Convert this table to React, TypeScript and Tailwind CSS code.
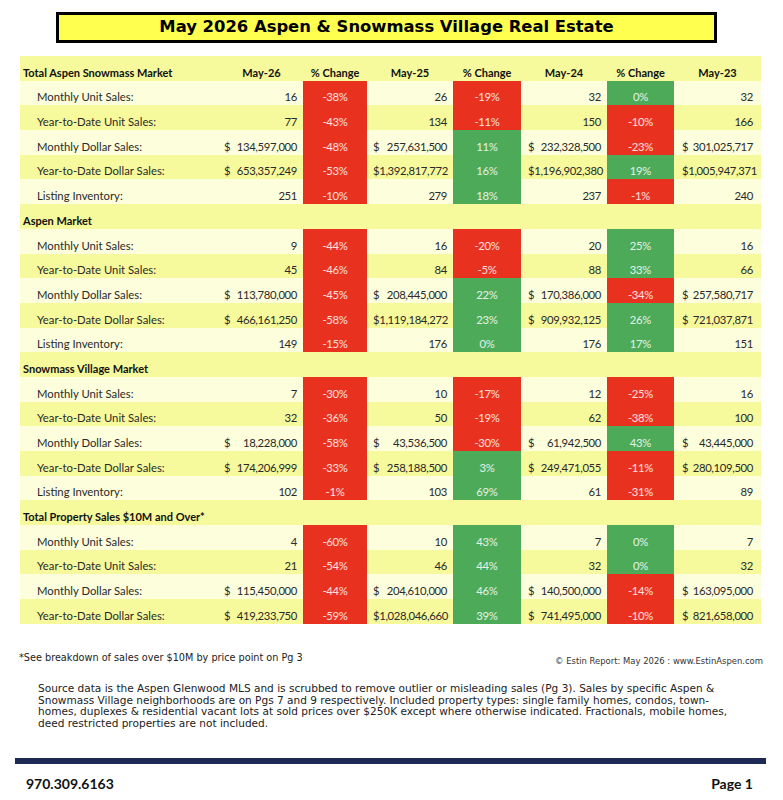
import React from "react";

type Pct = [string, "r" | "g"];
type Row = { label: string; v: string[]; p: Pct[] };
type Section = { title: string; rows: Row[] };

const sections: Section[] = [
  {
    title: "Total Aspen Snowmass Market",
    rows: [
      { label: "Monthly Unit Sales:", v: ["16", "26", "32", "32"], p: [["-38%", "r"], ["-19%", "r"], ["0%", "g"]] },
      { label: "Year-to-Date Unit Sales:", v: ["77", "134", "150", "166"], p: [["-43%", "r"], ["-11%", "r"], ["-10%", "r"]] },
      { label: "Monthly Dollar Sales:", v: ["$134,597,000", "$257,631,500", "$232,328,500", "$301,025,717"], p: [["-48%", "r"], ["11%", "g"], ["-23%", "r"]] },
      { label: "Year-to-Date Dollar Sales:", v: ["$653,357,249", "$1,392,817,772", "$1,196,902,380", "$1,005,947,371"], p: [["-53%", "r"], ["16%", "g"], ["19%", "g"]] },
      { label: "Listing Inventory:", v: ["251", "279", "237", "240"], p: [["-10%", "r"], ["18%", "g"], ["-1%", "r"]] },
    ],
  },
  {
    title: "Aspen Market",
    rows: [
      { label: "Monthly Unit Sales:", v: ["9", "16", "20", "16"], p: [["-44%", "r"], ["-20%", "r"], ["25%", "g"]] },
      { label: "Year-to-Date Unit Sales:", v: ["45", "84", "88", "66"], p: [["-46%", "r"], ["-5%", "r"], ["33%", "g"]] },
      { label: "Monthly Dollar Sales:", v: ["$113,780,000", "$208,445,000", "$170,386,000", "$257,580,717"], p: [["-45%", "r"], ["22%", "g"], ["-34%", "r"]] },
      { label: "Year-to-Date Dollar Sales:", v: ["$466,161,250", "$1,119,184,272", "$909,932,125", "$721,037,871"], p: [["-58%", "r"], ["23%", "g"], ["26%", "g"]] },
      { label: "Listing Inventory:", v: ["149", "176", "176", "151"], p: [["-15%", "r"], ["0%", "g"], ["17%", "g"]] },
    ],
  },
  {
    title: "Snowmass Village Market",
    rows: [
      { label: "Monthly Unit Sales:", v: ["7", "10", "12", "16"], p: [["-30%", "r"], ["-17%", "r"], ["-25%", "r"]] },
      { label: "Year-to-Date Unit Sales:", v: ["32", "50", "62", "100"], p: [["-36%", "r"], ["-19%", "r"], ["-38%", "r"]] },
      { label: "Monthly Dollar Sales:", v: ["$18,228,000", "$43,536,500", "$61,942,500", "$43,445,000"], p: [["-58%", "r"], ["-30%", "r"], ["43%", "g"]] },
      { label: "Year-to-Date Dollar Sales:", v: ["$174,206,999", "$258,188,500", "$249,471,055", "$280,109,500"], p: [["-33%", "r"], ["3%", "g"], ["-11%", "r"]] },
      { label: "Listing Inventory:", v: ["102", "103", "61", "89"], p: [["-1%", "r"], ["69%", "g"], ["-31%", "r"]] },
    ],
  },
  {
    title: "Total Property Sales $10M and Over*",
    rows: [
      { label: "Monthly Unit Sales:", v: ["4", "10", "7", "7"], p: [["-60%", "r"], ["43%", "g"], ["0%", "g"]] },
      { label: "Year-to-Date Unit Sales:", v: ["21", "46", "32", "32"], p: [["-54%", "r"], ["44%", "g"], ["0%", "g"]] },
      { label: "Monthly Dollar Sales:", v: ["$115,450,000", "$204,610,000", "$140,500,000", "$163,095,000"], p: [["-44%", "r"], ["46%", "g"], ["-14%", "r"]] },
      { label: "Year-to-Date Dollar Sales:", v: ["$419,233,750", "$1,028,046,660", "$741,495,000", "$821,658,000"], p: [["-59%", "r"], ["39%", "g"], ["-10%", "r"]] },
    ],
  },
];

// column widths measured off the sheet
const grid = "grid grid-cols-[200px_83px_64px_86px_68px_86px_67px_87px] h-[24.7px] items-stretch";
const valPad = ["pl-[4px] pr-[6px]", "pl-[6px] pr-[6px]", "pl-[7px] pr-[6px]", "pl-[8px] pr-[8px]"];
const heads = ["May-26", "May-25", "May-24", "May-23"];
const cell = "flex items-end pb-[1px] leading-[15px]";

const Value = ({ v, i }: { v: string; i: number }) => {
  const money = v.startsWith("$");
  return (
    <div className={`${cell} tracking-[-0.35px] ${money ? "justify-between" : "justify-end"} ${valPad[i]}`}>
      {money && <span>$</span>}
      <span>{money ? v.slice(1) : v}</span>
    </div>
  );
};

const PctCell = ({ p }: { p: Pct }) => (
  <div
    className={`${cell} justify-center tracking-[-0.3px] text-white/85 ${
      p[1] === "r" ? "bg-[#e8321f]" : "bg-[#4caa59]"
    }`}
  >
    {p[0]}
  </div>
);

export default function App() {
  return (
    <div className="w-[783px] h-[800px] bg-white text-[#222] overflow-hidden">
      <div className="pt-[12px]">
        <div className="ml-[56px] w-[661px] h-[31px] border-[3px] border-black bg-[#ffff4f] flex items-center justify-center [font-family:'DejaVu_Sans',sans-serif] font-bold text-[16.4px] text-black">
          May 2026 Aspen &amp; Snowmass Village Real Estate
        </div>
      </div>

      <div className="ml-[20px] mt-[13px] w-[741px] bg-[#f6f99c] [font-family:Lato,sans-serif] text-[11.3px] text-[#2a2a2a]">
        {sections.map((s, si) => (
          <div key={s.title}>
            <div className={`${grid} bg-[#f6f99c] font-bold text-[#111] text-[11px]`}>
              <div className={`${cell} pl-[3px] whitespace-nowrap ${si === 0 ? "" : "col-span-8"}`}>{s.title}</div>
              {si === 0 &&
                heads.map((h, i) => (
                  <React.Fragment key={h}>
                    <div className={`${cell} justify-center`}>{h}</div>
                    {i < 3 && <div className={`${cell} justify-center`}>% Change</div>}
                  </React.Fragment>
                ))}
            </div>
            {s.rows.map((r, ri) => (
              <div key={r.label} className={`${grid} ${ri % 2 === 0 ? "bg-[#fcfedc]" : "bg-[#f6f99c]"}`}>
                <div className={`${cell} pl-[17px]`}>{r.label}</div>
                {r.v.map((v, i) => (
                  <React.Fragment key={i}>
                    <Value v={v} i={i} />
                    {i < 3 && <PctCell p={r.p[i]} />}
                  </React.Fragment>
                ))}
              </div>
            ))}
          </div>
        ))}
      </div>

      <div className="mt-[27px] ml-[19px] mr-[20px] flex justify-between items-start">
        <div className="[font-family:'DejaVu_Sans',sans-serif] text-[9.7px] leading-[13px]">
          *See breakdown of sales over $10M by price point on Pg 3
        </div>
        <div className="mt-[5px] [font-family:'DejaVu_Sans',sans-serif] text-[8.45px] leading-[10px] text-[#333]">
          © Estin Report: May 2026 : www.EstinAspen.com
        </div>
      </div>

      <p className="mt-[17px] ml-[38px] w-[740px] [font-family:'DejaVu_Sans',sans-serif] text-[10.55px] leading-[11.7px] text-[#222]">
        Source data is the Aspen Glenwood MLS and is scrubbed to remove outlier or misleading sales (Pg 3). Sales by specific Aspen &amp;
        <br />
        Snowmass Village neighborhoods are on Pgs 7 and 9 respectively. Included property types: single family homes, condos, town-
        <br />
        homes, duplexes &amp; residential vacant lots at sold prices over $250K except where otherwise indicated. Fractionals, mobile homes,
        <br />
        deed restricted properties are not included.
      </p>

      <div className="mt-[28px] ml-[15px] w-[751px] h-[6px] bg-[#1e2a55]" />

      <div className="mt-[9px] ml-[26px] mr-[30px] flex justify-between items-center [font-family:Lato,sans-serif] font-bold text-[14px] text-[#111]">
        <span>970.309.6163</span>
        <span>Page 1</span>
      </div>
    </div>
  );
}
